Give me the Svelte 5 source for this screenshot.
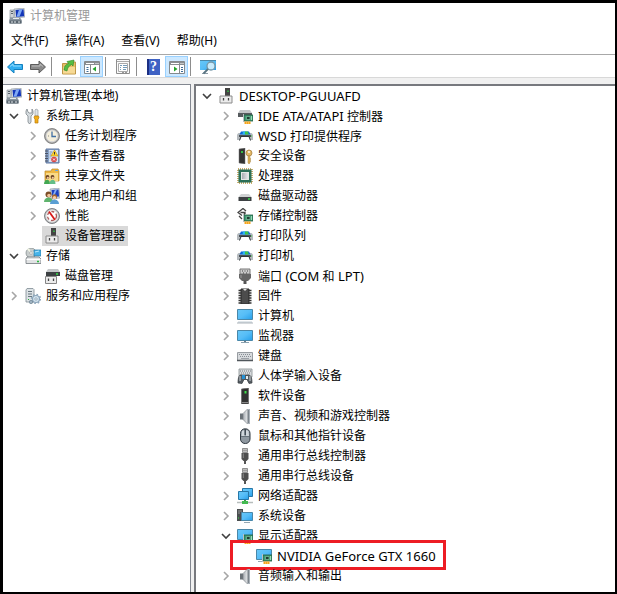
<script>
  const pc = '<path d="M5 1l10-1 1 9-10 1z" fill="#d5dbe0" stroke="#8b939b" stroke-width=".6"/><path d="M6.5 2l8-.8.7 7-8 .8z" fill="#1336b8"/><path d="M10 1.700l3.500-.4-3 7.300-3 .2z" fill="#7fa8f4"/><path d="M1 2h4v8H1z" fill="#cfd4d8" stroke="#7d868d" stroke-width=".6"/><path d="M2 3.500h2M2 5.500h2" stroke="#59636c"/><path d="M1 9.500h10l2 3v3H0v-3z" fill="#8a959e"/><path d="M1 12.500h11v3H1z" fill="#59656f"/><path d="M2 14h2M5 14h2M9 14h2M4 10.500h6" stroke="#e6ebee"/>';
  const printer = '<path d="M1.500 5h13L16 6.500V12H0V6.500z" fill="#b4b9bd"/><path d="M2 7h12v2H2z" fill="#4a5054"/><path d="M4 3.500h8l1.500 3h-11z" fill="#0b66d8"/><path d="M6 3.500h2v3H5.500z" fill="#29b6ef"/><path d="M8 3.500h3l.8 3H8z" fill="#3fc44a"/><path d="M3 12l1.500-3.500h7L13 12z" fill="#fff"/><path d="M2.500 12.500L4 8.500h8l1.500 4" fill="none" stroke="#30363a"/><path d="M14 8h1" stroke="#3fd04a"/>';
  const card = '<path d="M7 7h9v6H7z" fill="#3c9a72" stroke="#22583f" stroke-width=".8"/><path d="M9.500 8.500h3.500v3H9.500z" fill="#1f3d33" stroke="#8dd0ae" stroke-width=".6"/><path d="M6.500 6v8" stroke="#b9c0c4"/><path d="M14.500 8v4" stroke="#9ad8b5"/><path d="M7.500 13.500h6V16h-6z" fill="#f6a31b"/><path d="M9.500 14v2M11.500 14v2" stroke="#fbd27b" stroke-width=".6"/>';
  const screen = '<path d="M.5 2.500h15v10H.5z" fill="url(#sky)" stroke="#4a87a8"/>';
  const plug = '<path d="M5.500.500h5v4h-5z" fill="#ddd" stroke="#777" stroke-width=".8"/><path d="M7 1.500v2M9 1.500v2" stroke="#555" stroke-width=".9"/><path d="M4.500 5h7v6L9.500 13h-3L4.500 11z" fill="#4d4d4d"/><path d="M6.300 5.500v4.500" stroke="#888"/><path d="M7 12.500h2V16H7z" fill="#555"/>';
  const speaker = '<path d="M3 5.500h3v6H3z" fill="#6b7278"/><path d="M6 5.500L10.500 1v15L6 11.500z" fill="url(#metal)" stroke="#777e84" stroke-width=".6"/><path d="M10.500 1H13v15h-2.500z" fill="#aab2b9"/><path d="M11.500 2v13" stroke="#697077" stroke-width=".7"/>';
  const device = '<path d="M7 0h5v8H7z" fill="#444"/><path d="M10 2.500V4" stroke="#36e04a" stroke-width="1.200"/><path d="M2 8h12v7H2z" fill="#ececec" stroke="#8b8b8b"/><path d="M5.500 10v2.500M10.500 10v2.500" stroke="#444" stroke-width="1.300"/>';
  const panel = '<path d="M.5 2.500h15v12H.5z" fill="#fff" stroke="#85898c"/><path d="M1 3h14v3H1z" fill="#8a8e91"/><path d="M2 4.500h8M11.500 4.500h1M13.500 4.500h1" stroke="#fff"/>';
  const icons = {
    pc, printer, plug, speaker, device,
    tools: '<path d="M2 1L1 3v3l2 2v6l1.500 2L6 14V8l2-2V3L7 1v4H5L4 5 3 4z" fill="#d6dce0" stroke="#7e868c" stroke-width=".8"/><path d="M11 1l2 1v6h-3V2z" fill="#dfe4e8" stroke="#899197" stroke-width=".6"/><path d="M9.500 8h4l.5 2-1 1v4h-3v-4l-1-1z" fill="#f2ad18" stroke="#bc7d09" stroke-width=".7"/>',
    clock: '<circle cx="8" cy="8" r="7.500" fill="#a9a9a9" stroke="#737373" stroke-width=".8"/><circle cx="8" cy="8" r="5.800" fill="#f5efdc" stroke="#d8d8d8"/><path d="M8 3.500v5h4" fill="none" stroke="#416fa4" stroke-width="1.300"/><path d="M4 8h1" stroke="#888"/>',
    event: '<path d="M2 1h13v14H2z" fill="#8aa4c9" stroke="#6079a1"/><path d="M5 2h9v12H5z" fill="#dbe6f4"/><path d="M1 3h3M1 5.500h3M1 8h3M1 10.500h3M1 13h3" stroke="#4a5263"/><path d="M5.500 4h3M5.500 6h2M5.500 8h2M5.500 10h1" stroke="#6e8ab3"/><path d="M10.500 2L14 8H7z" fill="#ffd32e" stroke="#c39309" stroke-width=".6"/><path d="M10.500 4v2.500" stroke="#333"/><circle cx="10" cy="11.500" r="2.800" fill="#d84848"/><path d="M9 10.500l2 2m0-2l-2 2" stroke="#fff" stroke-width=".9"/>',
    share: '<path d="M1 3h6l1-2h6l1 2v10H1z" fill="#eeb844" stroke="#b9862a" stroke-width=".7"/><path d="M2 5h12v8H2z" fill="#f9d987"/><path d="M11 2.500h3" stroke="#6aa5de"/><circle cx="3.500" cy="9" r="1.900" fill="#694221"/><circle cx="8.500" cy="9" r="1.900" fill="#694221"/><circle cx="3.800" cy="9.800" r="1.100" fill="#f4c69f"/><circle cx="8.800" cy="9.800" r="1.100" fill="#f4c69f"/><path d="M0 16c0-5 6-6 6 0z" fill="#43a853"/><path d="M5.500 16c0-5 6-6 6 0z" fill="#63bd87"/>',
    users: '<path d="M6 1l9-1 1 10-9 1z" fill="#d2d8e0" stroke="#8791a0" stroke-width=".6"/><path d="M7.500 2l7-.6.6 7-7 .7z" fill="#1d43c0"/><path d="M11 1.800l2-.2-3 7H8z" fill="#88aef2"/><circle cx="4.500" cy="6.500" r="3" fill="#7c4e28"/><circle cx="5" cy="7.500" r="1.800" fill="#f3c39b"/><path d="M0 14c0-6 9-6 9 0z" fill="#5fb36d"/><circle cx="10.500" cy="8.800" r="2.500" fill="#a3672f"/><circle cx="10.500" cy="9.800" r="1.700" fill="#f8cda7"/><path d="M6 16c0-6 9-6 9 0z" fill="#5b9fd3"/>',
    perf: '<circle cx="8" cy="8" r="7.500" fill="#b9bcbe" stroke="#686b6e" stroke-width=".8"/><circle cx="8" cy="8" r="5.900" fill="#fff" stroke="#e5e5e5"/><circle cx="8" cy="8" r="4.500" fill="none" stroke="#aa5b5b" stroke-width="1.300" stroke-dasharray="3 2"/><path d="M5 3.500L11 12" stroke="#d91919" stroke-width="1.800"/>',
    storage: '<circle cx="6" cy="5" r="5" fill="#c8cdcd" stroke="#7c8688" stroke-width=".7"/><path d="M6 5L2 1.500 4 0zM6 5l4-2v3z" fill="#f3f6e5"/><circle cx="6" cy="5" r="1.300" fill="#fff" stroke="#888" stroke-width=".5"/><path d="M9 2h7v6H9z" fill="#47b4ea" stroke="#2b779f" stroke-width=".7"/><path d="M10 4l4-1" stroke="#baebff"/><path d="M2 9h12l2 2v4.500H1V11z" fill="#e1e3e4" stroke="#72797d" stroke-width=".8"/><path d="M1.500 11.500h14" stroke="#fff"/><path d="M12 13.500h2" stroke="#27b93d" stroke-width="1.500"/>',
    disk: '<path d="M4 1h10l2 3H2z" fill="#c4c7c9"/><path d="M2 4h14v4H2z" fill="#3d4143"/><path d="M12 6h2" stroke="#35df49" stroke-width="1.300"/><path d="M1.500 8.500h11v7h-11z" fill="#ececec" stroke="#858585"/><path d="M4.500 10.500V13M9.500 10.500V13" stroke="#444" stroke-width="1.300"/>',
    services: '<path d="M2 .5h6l1 1V14H1V2z" fill="#dce2e5" stroke="#7e8b93" stroke-width=".8"/><path d="M3 3.500h4M3 6h4M3 8.500h4" stroke="#697780"/><path d="M3 11.500h1" stroke="#28b339"/><circle cx="11" cy="11" r="3.500" fill="#d4e4ef" stroke="#8ba5ba" stroke-width="1.200"/><circle cx="11" cy="11" r="4.600" fill="none" stroke="#8ba5ba" stroke-width="1.300" stroke-dasharray="1.600 2"/><circle cx="11" cy="11" r="1.200" fill="#fff" stroke="#738fa5" stroke-width=".7"/><circle cx="6" cy="14" r="1.700" fill="#9db1c0" stroke="#718594" stroke-width=".7"/>',
    ide: '<path d="M3 2h10l2 3H1z" fill="#c2c5c7"/><path d="M1 5h14v4H1z" fill="#565b5e"/>' + card,
    security: '<path d="M2 1l6-1v16l-6-1z" fill="#343434" stroke="#777" stroke-width=".5"/><path d="M5 3v2" stroke="#35e84a" stroke-width="1.500"/><circle cx="12" cy="5" r="3" fill="#e3b866" stroke="#a98446" stroke-width=".8"/><circle cx="12" cy="4" r=".9" fill="#fff"/><path d="M11 8h2v7l-1 1-1-1z" fill="#dfb25a" stroke="#a98446" stroke-width=".5"/><path d="M13 11h1M13 13h1" stroke="#a97c24"/>',
    cpu: '<path d="M1 1h14v14H1z" fill="none" stroke="#b8913b" stroke-width="1.500" stroke-dasharray="1 1"/><path d="M1.500 1.500h13v13h-13z" fill="#2b6f57"/><path d="M4 4h8v8H4z" fill="#e3e7e4"/><path d="M5 5h6v6H5z" fill="url(#metal)"/>',
    drive: '<path d="M4 6h8l2.500 3h-13z" fill="#d0d2d3"/><path d="M1.500 9h13v4h-13z" fill="#3d4143"/><path d="M11 11h2" stroke="#35df49" stroke-width="1.500"/>',
    controller: '<path d="M6 .5L1 4.500l4 3M6 .5l3 2.500M3.500 4.500h5M8.500 4.500L7 6.500M2 8l3 3" fill="none" stroke="#444" stroke-width="1.300"/>' + card,
    port: '<path d="M3 1h10v5H3z" fill="#ccc" stroke="#777"/><path d="M5 3h1M7.500 3h1M10 3h1M6 5h1M9 5h1" stroke="#444"/><path d="M2 6h12v4l-3 3H5l-3-3z" fill="#666"/><path d="M4 7v3" stroke="#999"/><path d="M6.500 12.500h3V16h-3z" fill="#555"/>',
    firmware: '<path d="M4 1h8v15H4z" fill="#4c4c4c" stroke="#2c2c2c"/><path d="M1.500 2.500h3M1.500 5h3M1.500 7.500h3M1.500 10h3M1.500 12.500h3M1.500 15h3M11.500 2.500h3M11.500 5h3M11.500 7.500h3M11.500 10h3M11.500 12.500h3M11.500 15h3" stroke="#333" stroke-width="1.300"/><path d="M6 1h4l-2 2z" fill="#ddd"/>',
    computer: '<path d="M.5 1.500h15v10H.5z" fill="url(#sky)" stroke="#4a87a8"/><path d="M1 14h14" stroke="#c3cfd7"/><path d="M0 15h16" stroke="#72818c" stroke-width=".6"/>',
    monitor: screen + '<path d="M7 13h2v1H7z" fill="#677e8b"/><path d="M4 14.500h8" stroke="#8ba2b0"/>',
    keyboard: '<path d="M.5 4.500h15v8H.5z" fill="#d7dadd" stroke="#989da2"/><path d="M2 6.500h12M3 8.500h11" stroke="#878d94" stroke-dasharray="1 1"/><path d="M4 10.500h8" stroke="#9da2a8"/><path d="M0 12.500h16" stroke="#50565b" stroke-width="1.500"/>',
    hid: '<path d="M2 1h13v8H2z" fill="#d8dbdd" stroke="#878d91" stroke-width=".8"/><path d="M3 3h11M4 5h10" stroke="#777d82" stroke-dasharray="1 1"/><path d="M1 15c0-5 1-9 4-8h5c4-1 5 3 5 8l-3 .5-2-4H7l-2 4z" fill="#555c62" stroke="#343a3e" stroke-width=".7"/><path d="M3 8v5M13 8v5" stroke="#cfd5d8"/><path d="M5 7h3v4H5z" fill="#2690d3"/><path d="M9 8h2v3H9z" fill="#e5ecef"/>',
    software: '<path d="M4.500 1l7-1v16h-7z" fill="#333" stroke="#686868" stroke-width=".7"/><path d="M8.500 3v2.500" stroke="#3fe24b" stroke-width="2"/><path d="M5 14.500h6" stroke="#888"/>',
    mouse: '<rect x="3.500" y=".8" width="9.500" height="14.700" rx="4.500" fill="#8f98a0" stroke="#313941"/><path d="M5 3l2.500-1v6H4.500zM9 2l2.500 1 .5 5H9z" fill="#d0d6db"/><path d="M8.200 1v6" stroke="#38424b" stroke-width="1.300"/><path d="M4 8.500h9" stroke="#57616a" stroke-width=".7"/>',
    network: '<path d="M5.500.500h10v8h-10z" fill="url(#sky)" stroke="#2677a7"/><path d="M1.500 3.500h10v8h-10z" fill="url(#sky)" stroke="#2677a7"/><path d="M7 12h2v2H7z" fill="#359c43"/><path d="M0 14.500h16" stroke="#b7bdbc" stroke-width="1.500"/><path d="M5 13h6v3H5z" fill="#43ba50"/>',
    system: '<path d="M0 1h6v12H0z" fill="#4a4e50"/><path d="M1 3h4M1 5h2" stroke="#aaa" stroke-width=".8"/><path d="M1 10h1" stroke="#3fe24b"/><path d="M4.500 4.500h11v8h-11z" fill="url(#sky)" stroke="#4a87a8"/><path d="M7 14.500h6" stroke="#95a7b2"/>',
    display: '<path d="M.5 1.500h15v10H.5z" fill="url(#sky)" stroke="#4a87a8"/><path d="M2 13.500h4" stroke="#96a7b1"/>' + card,
    back: '<path d="M.5 8L7 2v3.500h8.500v5H7V14z" fill="#31aef0" stroke="#1480be"/><path d="M3 7.500L6 5v2h8" fill="none" stroke="#91dcff"/>',
    forward: '<path d="M15.500 8L9 2v3.500H.5v5H9V14z" fill="#8b8b8b" stroke="#5d5d5d"/><path d="M13 7.500L10 5v2H2" fill="none" stroke="#bdbdbd"/>',
    folder: '<path d="M1.500 4.500h5L8 3h6.500v12h-13z" fill="#e6be68" stroke="#bd9646"/><path d="M2 8h12v6.500H2z" fill="#f6d994"/><path d="M3 11c0-4 2-5.500 4.500-6.500L6 2.500 13 1l-1 6-1.500-1.500C8 7 6.500 8.500 6 12z" fill="#55bd43" stroke="#2b8626" stroke-width=".6"/>',
    tree: panel + '<path d="M6.500 6v8" stroke="#85898c"/><path d="M2.500 8.500h2M2.500 10.500h2M2.500 12.500h2" stroke="#3d6d98"/><path d="M12 7.500v5L8.500 10z" fill="#23a52a"/>',
    action: panel + '<path d="M10.500 6v8" stroke="#85898c"/><path d="M12 8.500h2M12 10.500h2M12 12.500h2" stroke="#3d6d98"/><path d="M5 7.500v5L8.500 10z" fill="#23a52a"/>',
    properties: '<path d="M1.500.500h13v14h-13z" fill="#fafafa" stroke="#8e8e8e"/><path d="M2 2.500h12" stroke="#aaa"/><path d="M3.500 4.500h9v8h-9z" fill="#fff" stroke="#aaa"/><path d="M5 6.500h2M8 6.500h4M5 8.500h1M8 8.500h4M5 10.500h1M8 10.500h3" stroke="#739bb8"/><path d="M7 13.500h2M10 13.500h2" stroke="#999"/>',
    find: '<path d="M0 1h16v10H0z" fill="url(#sky)"/><path d="M0 1.500h16" stroke="#4a87a8"/><path d="M2 14.500h6" stroke="#8b9ba5"/><circle cx="11" cy="7" r="4" fill="#c8ebfc" stroke="#7697a8" stroke-width="1.300"/><path d="M8 10l-4.500 4.500" stroke="#597482" stroke-width="1.800"/>'
  };

  const menus = ['文件(F)', '操作(A)', '查看(V)', '帮助(H)'];
  const tools = [
    { id: 'back', label: '后退' }, { id: 'forward', label: '前进' }, null,
    { id: 'folder', label: '上一级' }, { id: 'tree', label: '显示/隐藏控制台树', on: true }, null,
    { id: 'properties', label: '属性' }, null,
    { id: 'help', label: '帮助' }, { id: 'action', label: '显示/隐藏操作窗格', on: true }, null,
    { id: 'find', label: '扫描检测硬件改动' }
  ];
  // [level, state, icon, label]; state: root, open, closed or leaf
  const consoleTree = [
    [0, 'root', 'pc', '计算机管理(本地)'],
    [0, 'open', 'tools', '系统工具'],
    [1, 'closed', 'clock', '任务计划程序'],
    [1, 'closed', 'event', '事件查看器'],
    [1, 'closed', 'share', '共享文件夹'],
    [1, 'closed', 'users', '本地用户和组'],
    [1, 'closed', 'perf', '性能'],
    [1, 'leaf', 'device', '设备管理器', 'selected'],
    [0, 'open', 'storage', '存储'],
    [1, 'leaf', 'disk', '磁盘管理'],
    [0, 'closed', 'services', '服务和应用程序']
  ];
  const devices = [
    [0, 'open', 'device', 'DESKTOP-PGUUAFD'],
    [1, 'closed', 'ide', 'IDE ATA/ATAPI 控制器'],
    [1, 'closed', 'printer', 'WSD 打印提供程序'],
    [1, 'closed', 'security', '安全设备'],
    [1, 'closed', 'cpu', '处理器'],
    [1, 'closed', 'drive', '磁盘驱动器'],
    [1, 'closed', 'controller', '存储控制器'],
    [1, 'closed', 'printer', '打印队列'],
    [1, 'closed', 'printer', '打印机'],
    [1, 'closed', 'port', '端口 (COM 和 LPT)'],
    [1, 'closed', 'firmware', '固件'],
    [1, 'closed', 'computer', '计算机'],
    [1, 'closed', 'monitor', '监视器'],
    [1, 'closed', 'keyboard', '键盘'],
    [1, 'closed', 'hid', '人体学输入设备'],
    [1, 'closed', 'software', '软件设备'],
    [1, 'closed', 'speaker', '声音、视频和游戏控制器'],
    [1, 'closed', 'mouse', '鼠标和其他指针设备'],
    [1, 'closed', 'plug', '通用串行总线控制器'],
    [1, 'closed', 'plug', '通用串行总线设备'],
    [1, 'closed', 'network', '网络适配器'],
    [1, 'closed', 'system', '系统设备'],
    [1, 'open', 'display', '显示适配器'],
    [2, 'leaf', 'display', 'NVIDIA GeForce GTX 1660', 'marked'],
    [1, 'closed', 'speaker', '音频输入和输出']
  ];

  // splits a label into alternating Chinese and Latin runs; odd entries are Latin
  const runs = (text) => text.split(/([\x20-\x7e]+)/);
</script>

{#snippet icon(name)}
  {#if name === 'help'}
    <span class="help">?</span>
  {:else}
    <svg class="icon" viewBox="0 0 16 16" aria-hidden="true">{@html icons[name]}</svg>
  {/if}
{/snippet}

{#snippet tree(rows, label)}
  <ul class="tree" role="tree" aria-label={label}>
    {#each rows as [level, state, name, text, mark]}
      <li
        class={['row', 'level' + level, mark]}
        role="treeitem"
        aria-level={level + 1}
        aria-selected={mark === 'selected'}
      >
        {#if state === 'leaf'}
          <span class="twist"></span>
        {:else if state !== 'root'}
          <button class={['twist', state]} aria-label={(state === 'open' ? '折叠 ' : '展开 ') + text}>
            <svg viewBox="0 0 10 10" aria-hidden="true">
              <path d={state === 'open' ? 'M1 3l4 4 4-4' : 'M3 1l4 4-4 4'} />
            </svg>
          </button>
        {/if}
        <span class="item">{@render icon(name)}<span class="text">{#each runs(text) as run, i}{#if i % 2}<span class="latin">{run}</span>{:else}{run}{/if}{/each}</span></span>
      </li>
    {/each}
  </ul>
{/snippet}

<svg class="defs" aria-hidden="true">
  <defs>
    <linearGradient id="sky" x1="0" y1="0" x2="1" y2="1">
      <stop offset="0" stop-color="#69c8f8" /><stop offset=".5" stop-color="#56bdf7" /><stop offset="1" stop-color="#249eea" />
    </linearGradient>
    <linearGradient id="metal"><stop offset="0" stop-color="#a8adb2" /><stop offset="1" stop-color="#e6e8ea" /></linearGradient>
  </defs>
</svg>

<div class="window">
  <header class="title">{@render icon('pc')}<span>计算机管理</span></header>
  <nav class="menu">
    {#each menus as m}<button>{m}</button>{/each}
  </nav>
  <div class="toolbar" role="toolbar" aria-label="工具栏">
    {#each tools as t}
      {#if t}
        <button class={['tool', t.on && 'on']} aria-label={t.label}>{@render icon(t.id)}</button>
      {:else}
        <span class="sep"></span>
      {/if}
    {/each}
  </div>
  <main class="panes">
    <section class="pane side">{@render tree(consoleTree, '控制台树')}</section>
    <section class="pane content">{@render tree(devices, '设备')}</section>
  </main>
</div>

<style>
  :global(body) {
    margin: 0;
  }
  .defs {
    position: absolute;
    width: 0;
    height: 0;
  }
  .window {
    box-sizing: border-box;
    min-height: 100vh;
    display: flex;
    flex-direction: column;
    border: solid #000;
    border-width: 3px 2px 2px 3px;
    background: #fff;
    color: #000;
    font: 12px/20px 'Noto Sans', 'Noto Sans CJK SC', sans-serif;
    white-space: nowrap;
  }
  button {
    margin: 0;
    padding: 0;
    border: 0;
    background: none;
    color: inherit;
    font: inherit;
  }
  .icon {
    display: block;
    flex: none;
    width: 16px;
    height: 16px;
  }
  .title {
    display: flex;
    align-items: center;
    gap: 5px;
    height: 25px;
    padding-left: 6px;
    color: #999;
  }
  .menu {
    display: flex;
    gap: 1px;
    height: 26px;
    align-items: center;
    border-bottom: 1px solid #a8a8a8;
  }
  .menu button {
    padding: 0 8px;
  }
  .toolbar {
    display: flex;
    align-items: center;
    height: 21px;
    padding-top: 1px;
    border-bottom: 1px solid #d8d8d8;
  }
  .tool {
    box-sizing: border-box;
    display: grid;
    place-items: center;
    width: 23px;
    height: 21px;
    border: 1px solid transparent;
  }
  .on {
    border-color: #99d1ff;
    background: #cce8ff;
  }
  .sep {
    width: 1px;
    height: 19px;
    margin: 0 5px 0 2px;
    background: #8d8d8d;
  }
  .help {
    width: 13px;
    height: 16px;
    background: linear-gradient(90deg, #1b2f83 2px, #3f62c4 2px);
    color: #fff;
    font: bold 14px/16px 'Liberation Serif', serif;
    text-align: center;
  }
  .panes {
    flex: 1;
    display: flex;
    gap: 3px;
    padding-top: 6px;
    background: #f0f0f0;
  }
  .pane {
    background: #fff;
    border-top: 1px solid #828790;
  }
  .side {
    flex: 0 0 187px;
    border-right: 1px solid #828790;
  }
  .content {
    flex: 1;
    min-width: 0;
    border-top: 2px solid #77797e;
    border-left: 2px solid #77797e;
  }
  .tree {
    margin: 0;
    padding: 1px 0 6px 3px;
    list-style: none;
  }
  .content .tree {
    padding-top: 0;
  }
  .content .latin {
    font-size: 13px;
  }
  .row {
    position: relative;
    display: flex;
    align-items: center;
    height: 20px;
  }
  .level1 {
    padding-left: 19px;
  }
  .level2 {
    padding-left: 38px;
  }
  .twist {
    flex: none;
    display: grid;
    place-items: center;
    width: 15px;
    height: 20px;
    margin-right: 2px;
  }
  .twist svg {
    width: 10px;
    height: 10px;
    fill: none;
    stroke: #a6a6a6;
    stroke-width: 1.6;
  }
  .open svg {
    stroke: #404040;
  }
  .item {
    display: flex;
    align-items: center;
    gap: 5px;
    height: 20px;
    padding: 0 3px 0 2px;
  }
  .side .row:first-child .item {
    padding-left: 0;
  }
  .selected .item {
    background: #d9d9d9;
  }
  .marked::after {
    content: '';
    position: absolute;
    box-sizing: border-box;
    left: 31px;
    top: -6px;
    width: 216px;
    height: 30px;
    border: 3px solid #ed1c24;
  }
</style>
